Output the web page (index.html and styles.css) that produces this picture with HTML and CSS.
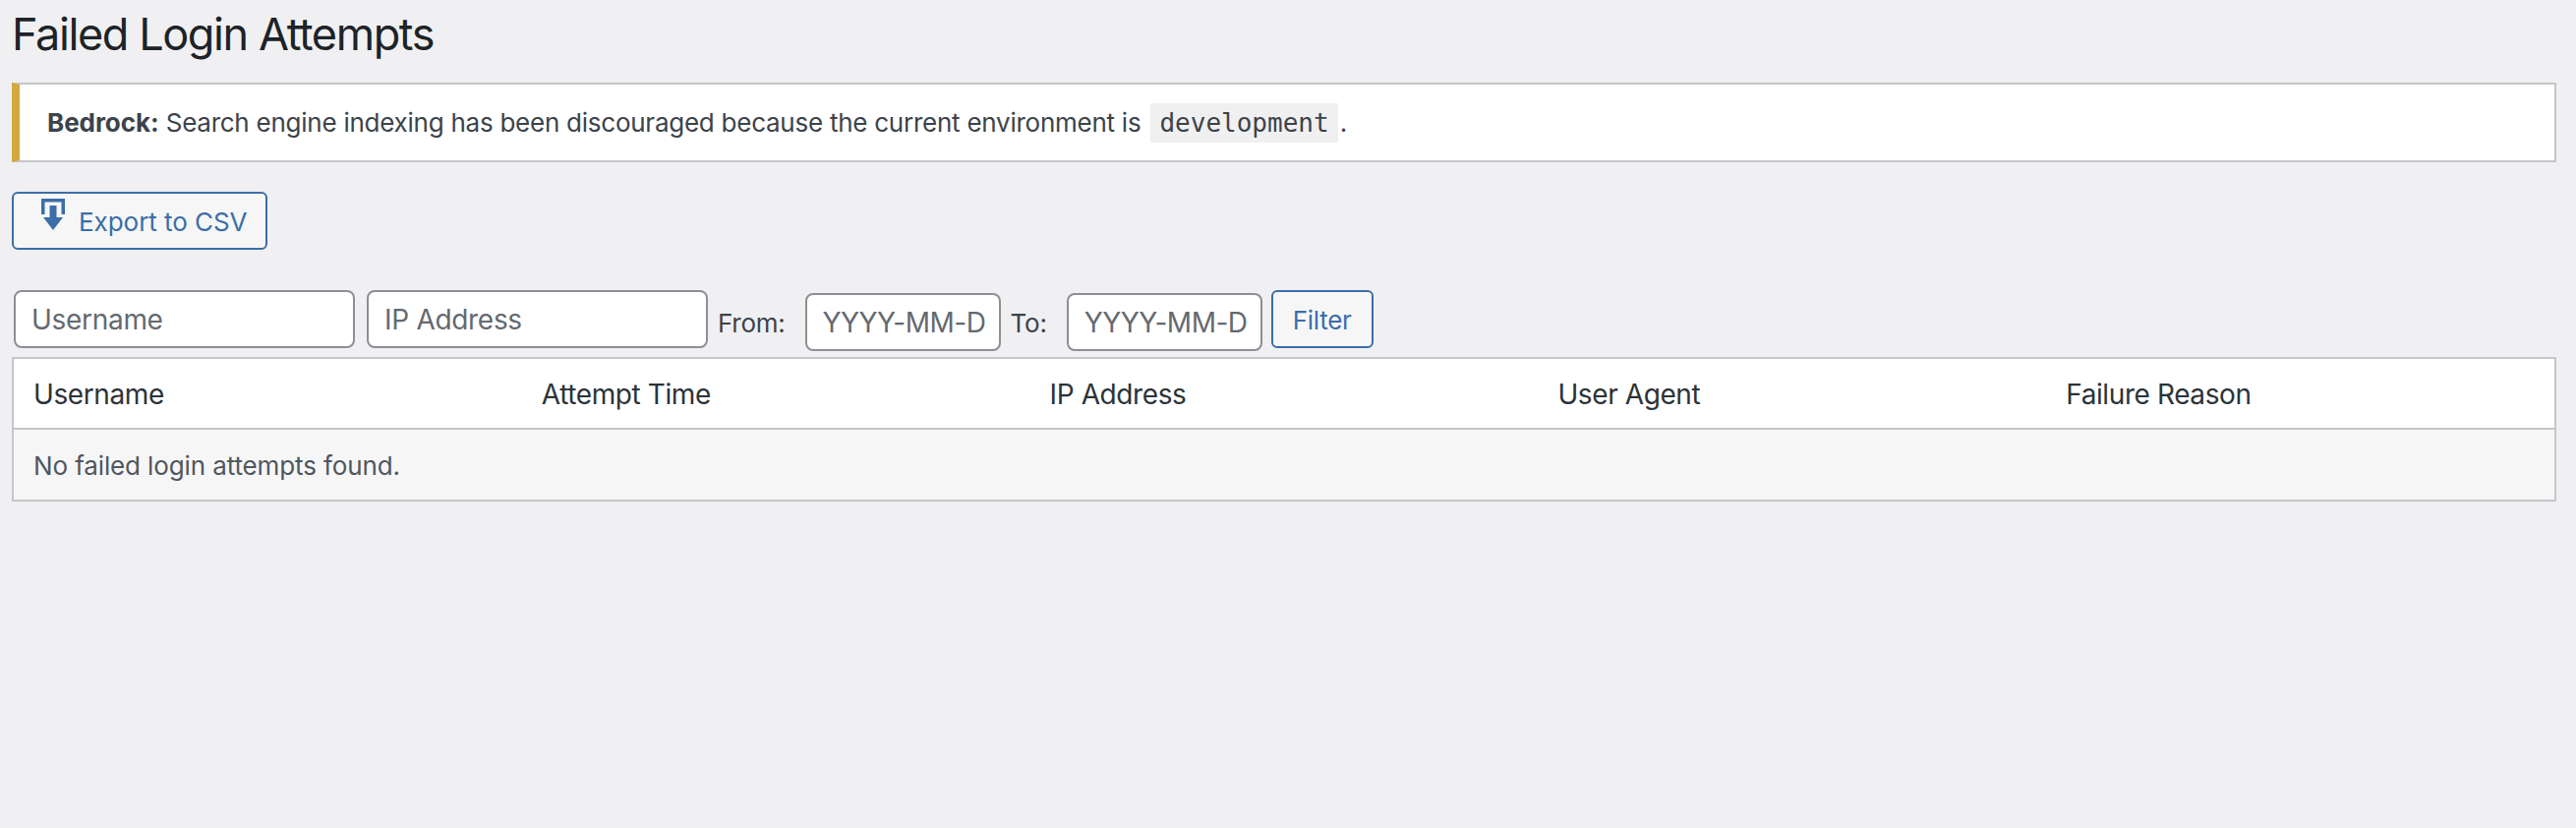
FILE: index.html
```html
<!DOCTYPE html>
<html lang="en">
<head>
    <meta charset="UTF-8">
    <meta name="viewport" content="width=device-width, initial-scale=1.0">
    <title>Failed Login Attempts</title>
    <link rel="stylesheet" href="styles.css">
</head>
<body>
    <div class="wrap">
        <h1>Failed Login Attempts</h1>
        <div class="notice">
            <p><strong>Bedrock:</strong> Search engine indexing has been discouraged because the current environment is <code>development</code>.</p>
        </div>
        <a class="button export-button" href="#">
            <svg class="export-icon" viewBox="0 0 24 32" aria-hidden="true">
                <path d="M0 0H24V16H20.5V3.5H3.5V16H0Z"/>
                <path d="M8.5 7H15.5V19H22L12 32L2 19H8.5Z"/>
            </svg>
            Export to CSV
        </a>
        <form class="filters">
            <input class="filter-input" type="text" placeholder="Username">
            <input class="filter-input" type="text" placeholder="IP Address">
            <label class="filter-label from-label">From:</label>
            <input class="filter-date" type="text" placeholder="YYYY-MM-D">
            <label class="filter-label to-label">To:</label>
            <input class="filter-date" type="text" placeholder="YYYY-MM-D">
            <button class="button filter-button" type="button">Filter</button>
        </form>
        <table class="attempts">
            <thead>
                <tr>
                    <th>Username</th>
                    <th>Attempt Time</th>
                    <th>IP Address</th>
                    <th>User Agent</th>
                    <th>Failure Reason</th>
                </tr>
            </thead>
            <tbody>
                <tr>
                    <td colspan="5">No failed login attempts found.</td>
                </tr>
            </tbody>
        </table>
    </div>
</body>
</html>
```

FILE: styles.css
```css
body {
    margin: 0;
    background-color: #f0f0f2;
    color: #3c434a;
    font-family: Inter, "Noto Sans", sans-serif;
    font-size: 26px;
    letter-spacing: -0.25px;
}
.wrap {
    padding: 0 20px 0 12px;
}
h1 {
    margin: 0;
    height: 84px;
    padding-top: 7px;
    box-sizing: border-box;
    color: #1d2327;
    font-size: 45px;
    font-weight: 400;
    letter-spacing: -1.4px;
    line-height: 56px;
}
.notice {
    display: flex;
    align-items: center;
    height: 81px;
    box-sizing: border-box;
    padding-left: 28px;
    background-color: white;
    border: 2px solid #c6c6ca;
    border-left: 8px solid #d4a83f;
}
.notice p {
    margin: 0;
}
.notice strong {
    letter-spacing: -0.05px;
}
.notice code {
    display: inline-block;
    margin: 0 2px 0 3px;
    padding: 5px 9px;
    background-color: #f0f0f1;
    font-family: "DejaVu Sans Mono", monospace;
    font-size: 26px;
    letter-spacing: 0;
}
.button {
    box-sizing: border-box;
    background-color: #f6f6f7;
    border: 2px solid #3b6ea8;
    border-radius: 6px;
    color: #3b6ea8;
    font-family: inherit;
    letter-spacing: inherit;
    text-decoration: none;
}
.export-button {
    display: flex;
    width: 260px;
    height: 59px;
    margin-top: 30px;
    padding: 2px 0 0 28px;
    align-items: center;
    gap: 14px;
    font-size: 26px;
    letter-spacing: -0.05px;
    line-height: 30px;
}
.export-icon {
    width: 24px;
    height: 32px;
    margin-top: -15px;
    fill: #3b6ea8;
}
.filters {
    display: flex;
    align-items: flex-start;
    margin: 41px 0 6px;
    padding-left: 2px;
}
.filter-input,
.filter-date {
    box-sizing: border-box;
    height: 59px;
    background-color: white;
    border: 2px solid #8c8f94;
    border-radius: 8px;
    color: #2c3338;
    font-family: inherit;
    font-size: 28px;
    letter-spacing: -0.3px;
}
.filter-input::placeholder,
.filter-date::placeholder {
    color: #646970;
    opacity: 1;
}
.filter-input {
    width: 347px;
    margin-right: 12px;
    padding: 0 16px;
}
.filter-date {
    width: 199px;
    margin-top: 3px;
    padding: 0 10px 0 16px;
    letter-spacing: -0.5px;
}
.filter-label {
    padding-top: 18px;
    line-height: 32px;
}
.from-label {
    margin: 0 20px 0 -2px;
}
.to-label {
    margin: 0 20px 0 10px;
}
.filter-button {
    width: 104px;
    height: 59px;
    margin-left: 9px;
    padding-top: 3px;
    font-size: 26px;
}
.attempts {
    width: 100%;
    table-layout: fixed;
    border-collapse: separate;
    border-spacing: 0;
    background-color: white;
    border: 2px solid #c6c6ca;
}
.attempts th {
    height: 68px;
    padding: 2px 20px 0;
    border-bottom: 2px solid #c6c6ca;
    color: #2c3338;
    font-size: 28px;
    font-weight: 400;
    letter-spacing: -0.4px;
    text-align: left;
}
.attempts td {
    height: 69px;
    padding: 2px 20px 0;
    background-color: #f6f6f7;
    color: #50575e;
    letter-spacing: -0.12px;
}
```
